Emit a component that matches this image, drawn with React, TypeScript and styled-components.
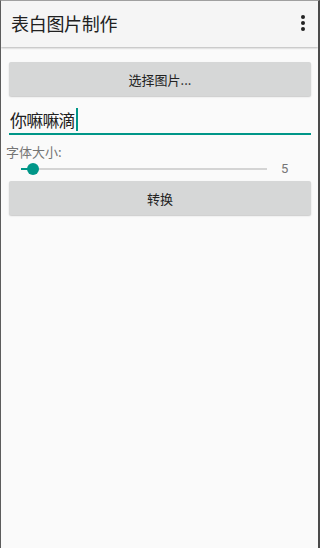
import React from 'react'
import styled, { createGlobalStyle } from 'styled-components'

const teal = '#009688'
const cjk = '"Noto Sans CJK SC", "Noto Sans", sans-serif'

const GlobalStyle = createGlobalStyle`
  html, body {
    margin: 0;
    padding: 0;
    background: #fafafa;
  }
  * {
    box-sizing: border-box;
  }
`

export default function App() {
  return (
    <Screen>
      <GlobalStyle />
      <Toolbar>
        <Title>表白图片制作</Title>
        <MenuButton aria-label="more">
          <Dot />
          <Dot />
          <Dot />
        </MenuButton>
      </Toolbar>

      <Content>
        <FlatButton>选择图片...</FlatButton>

        <EditText>
          <EditValue>你嘛嘛滴</EditValue>
          <Caret />
        </EditText>

        <Label>字体大小:</Label>
        <SliderRow>
          <Track>
            <TrackFill style={{ width: `${(5 / 100) * 100}%` }} />
            <Thumb style={{ left: `${(5 / 100) * 100}%` }} />
          </Track>
          <SliderValue>5</SliderValue>
        </SliderRow>

        <FlatButton>转换</FlatButton>
      </Content>
    </Screen>
  )
}

const Screen = styled.div`
  width: 320px;
  height: 548px;
  background: #fafafa;
  border-top: 1px solid #a0a0a0;
  border-left: 1px solid #5c5c5c;
  border-right: 2px solid #4a4a4a;
  display: flex;
  flex-direction: column;
  overflow: hidden;
  font-family: ${cjk};
`

const Toolbar = styled.header`
  height: 46px;
  flex-shrink: 0;
  display: flex;
  align-items: center;
  justify-content: space-between;
  padding: 0 10px 0 10px;
  background: #f5f5f5;
  box-shadow: 0 1px 2px rgba(0, 0, 0, 0.28);
  position: relative;
  z-index: 1;
`

const Title = styled.h1`
  margin: 0;
  margin-top: -2px;
  font-size: 18px;
  font-weight: 400;
  color: #212121;
  letter-spacing: -0.3px;
`

const MenuButton = styled.div`
  width: 6px;
  display: flex;
  flex-direction: column;
  align-items: center;
  gap: 2px;
  margin-right: 2px;
  margin-top: -2px;
`

const Dot = styled.span`
  width: 4px;
  height: 4px;
  border-radius: 50%;
  background: #222;
`

const Content = styled.main`
  display: flex;
  flex-direction: column;
  padding: 15px 7px 0 8px;
`

const FlatButton = styled.button`
  height: 34px;
  border: none;
  border-radius: 2px;
  background: #d6d7d7;
  box-shadow: 0 1px 1.5px rgba(0, 0, 0, 0.2);
  font-family: ${cjk};
  font-size: 13px;
  color: #222;
  padding: 0;
`

const EditText = styled.div`
  height: 39px;
  display: flex;
  align-items: flex-end;
  padding: 0 0 1px 1px;
  border-bottom: 2px solid ${teal};
`

const EditValue = styled.span`
  font-size: 17px;
  line-height: 24px;
  letter-spacing: -0.8px;
  color: #212121;
`

const Caret = styled.span`
  width: 2px;
  height: 23px;
  margin: 0 0 1px 1px;
  background: ${teal};
`

const Label = styled.div`
  margin: 9px 0 0 -3px;
  font-size: 13px;
  line-height: 16px;
  color: #757575;
`

const SliderRow = styled.div`
  height: 17px;
  display: flex;
  align-items: center;
  padding: 0 0 0 12px;
  margin-bottom: 4px;
`

const Track = styled.div`
  position: relative;
  width: 246px;
  height: 2px;
  background: #d4d4d4;
`

const TrackFill = styled.div`
  height: 100%;
  background: ${teal};
`

const Thumb = styled.span`
  position: absolute;
  top: 50%;
  width: 12px;
  height: 12px;
  border-radius: 50%;
  background: ${teal};
  transform: translate(-50%, -50%);
`

const SliderValue = styled.span`
  margin-left: 14px;
  font-family: Roboto, "Noto Sans", sans-serif;
  font-size: 13px;
  color: #757575;
`
